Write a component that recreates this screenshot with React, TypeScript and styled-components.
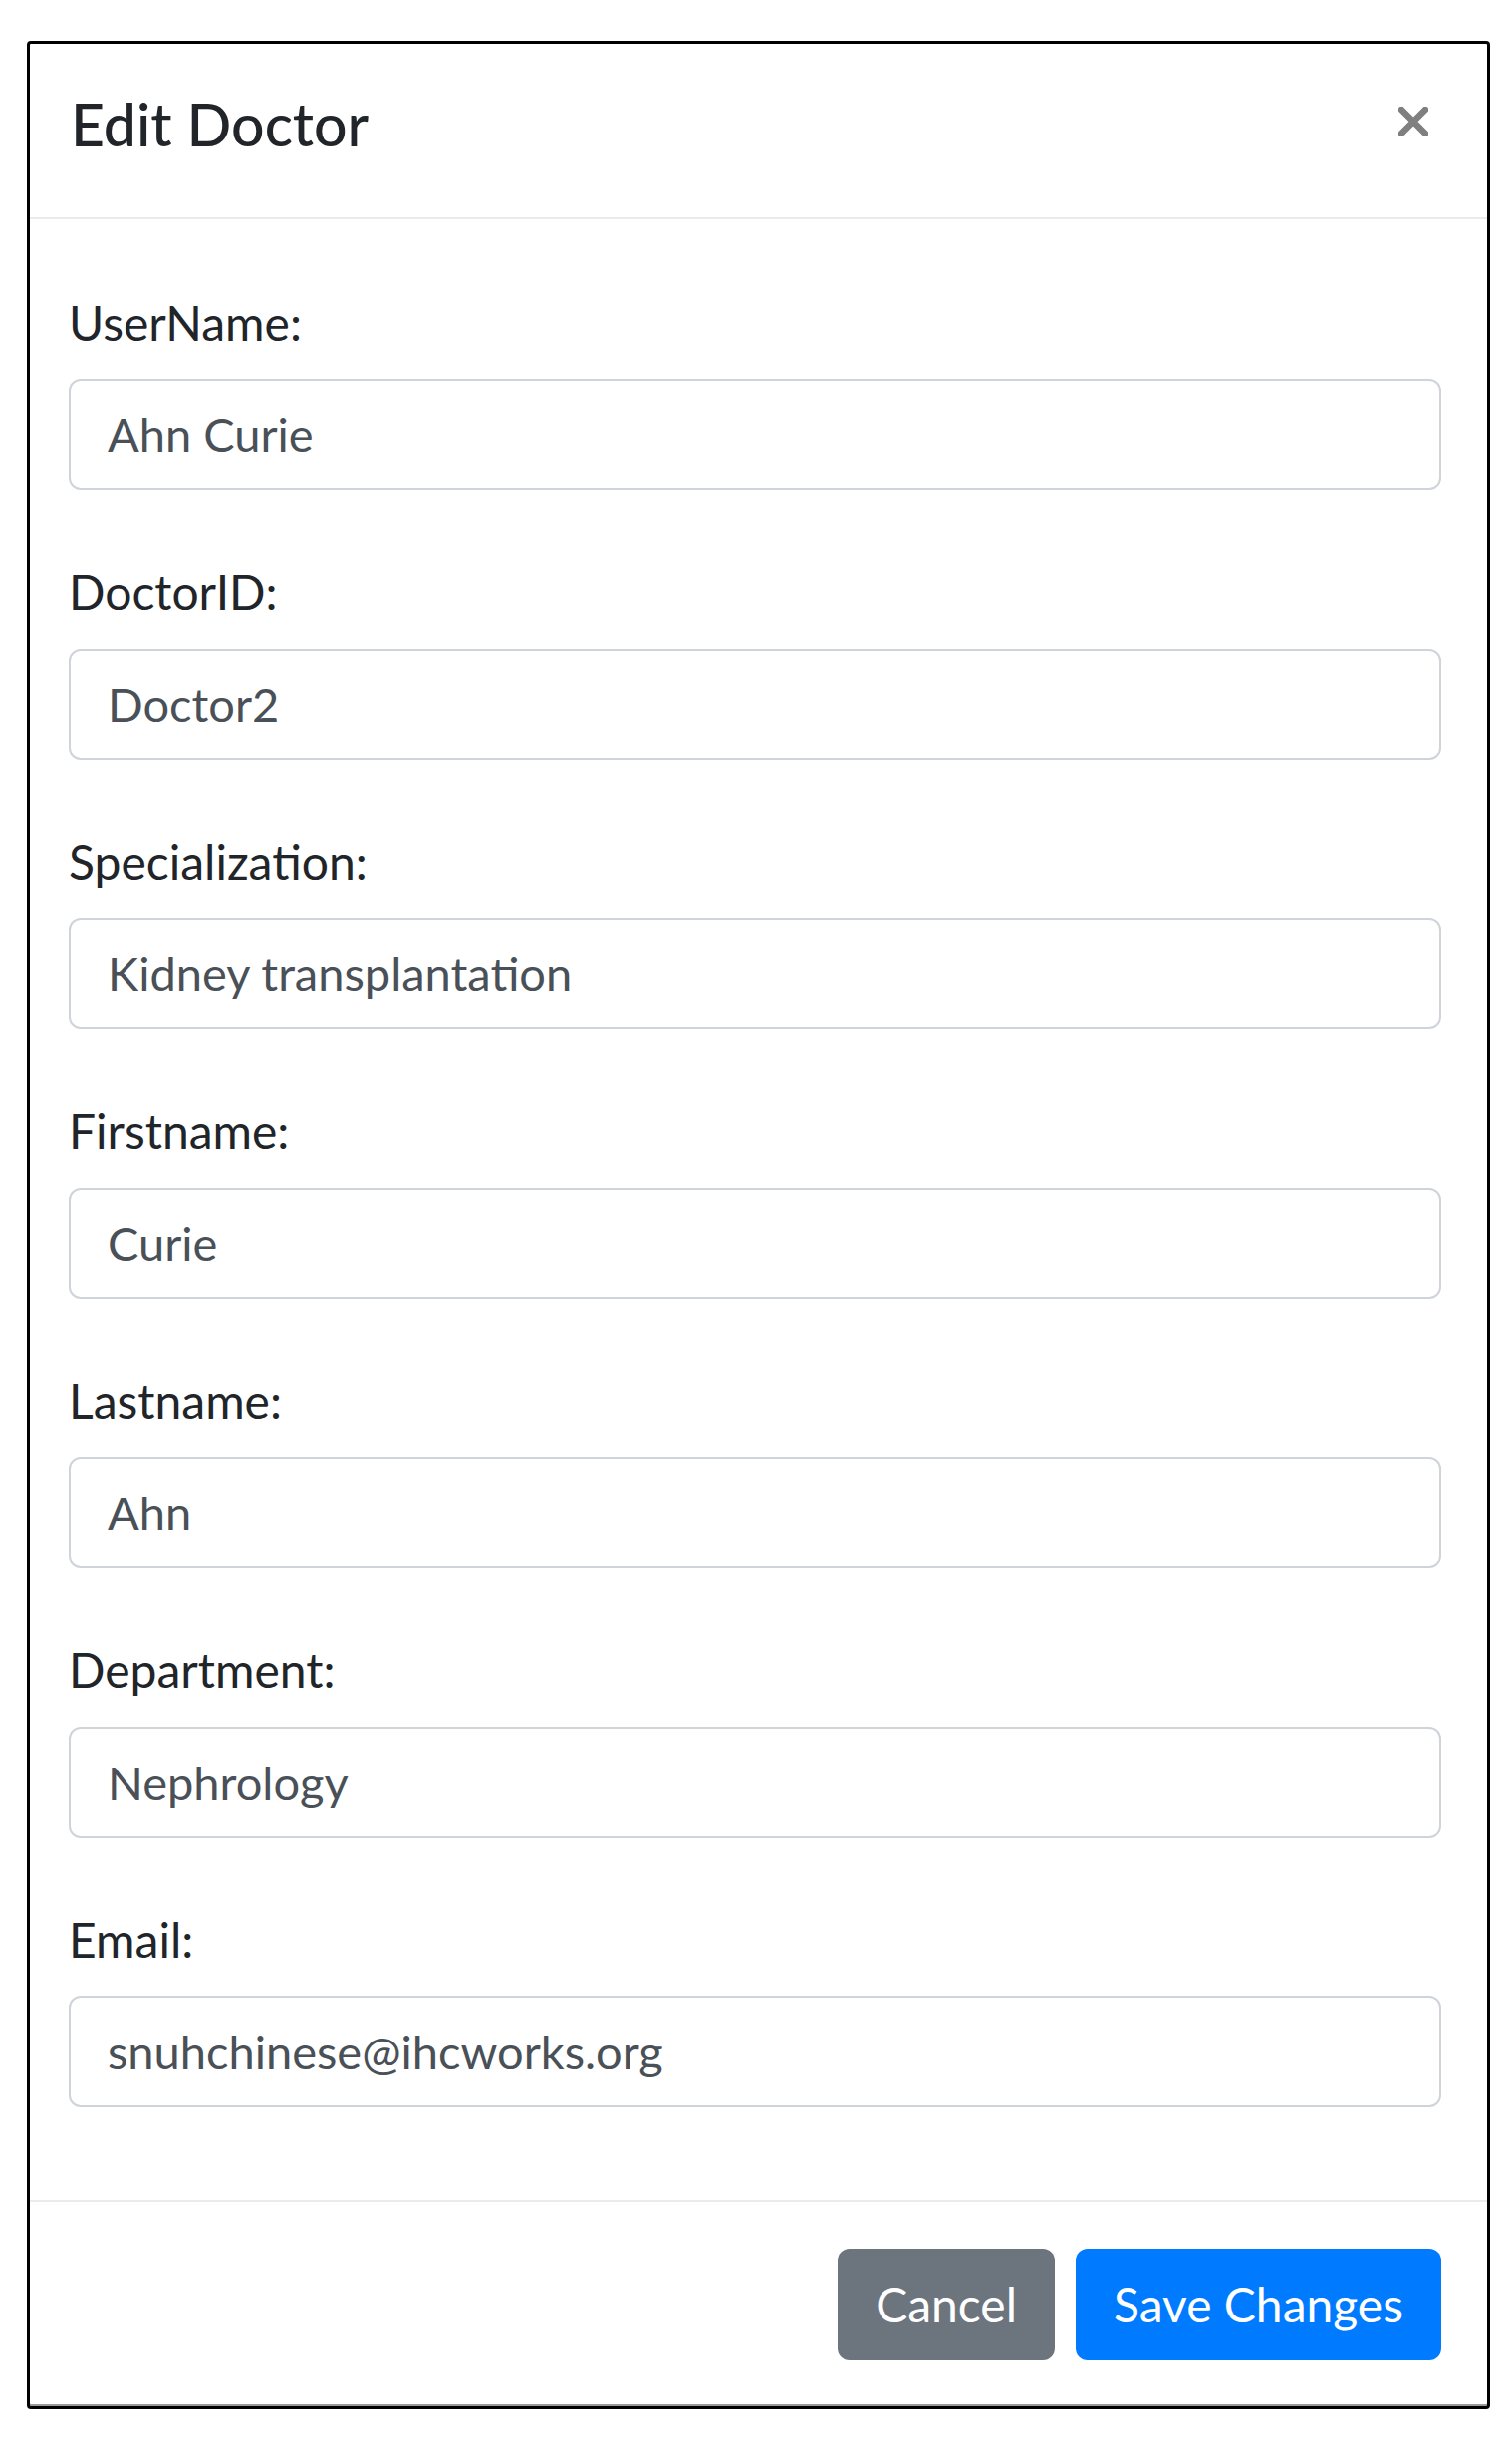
import React from "react";
import styled, { createGlobalStyle } from "styled-components";

const GlobalStyle = createGlobalStyle`
  html, body {
    margin: 0;
    padding: 0;
    background: #ffffff;
  }
  body {
    font-family: "Segoe UI", Lato, "Open Sans", sans-serif;
    color: #212529;
  }
  * {
    box-sizing: border-box;
  }
`;

const Page = styled.div`
  padding: 41px 0 0 27px;
  width: 1518px;
  min-height: 2460px;
`;

const Modal = styled.div`
  width: 1469px;
  height: 2377px;
  border: 3px solid #000000;
  border-radius: 4px;
  background: #ffffff;
  display: flex;
  flex-direction: column;
  box-shadow: inset 0 -2px 0 #9a9a9a;
`;

const Header = styled.div`
  height: 176px;
  flex-shrink: 0;
  display: flex;
  justify-content: space-between;
  align-items: flex-start;
  padding: 46px 59px 0 41px;
  border-bottom: 2px solid #e9ecef;
`;

const Title = styled.h5`
  margin: 0;
  font-size: 59px;
  font-weight: 500;
  line-height: 1.2;
  color: #212529;
`;

const CloseButton = styled.button`
  margin-top: 17px;
  padding: 0;
  border: 0;
  background: transparent;
  width: 30px;
  height: 30px;
  cursor: pointer;
  display: flex;
`;

const Body = styled.div`
  flex: 1;
  display: flex;
  flex-direction: column;
  gap: 72px;
  padding: 73.5px 46px 0 39px;
`;

const Group = styled.div`
  display: flex;
  flex-direction: column;
`;

const Label = styled.label`
  font-size: 48px;
  line-height: 60px;
  margin: 0 0 26.5px;
  color: #212529;
`;

const Input = styled.input`
  width: 100%;
  height: 112px;
  padding: 0 37px;
  border: 2px solid #ced4da;
  border-radius: 12px;
  font-family: "Segoe UI", Lato, "Open Sans", sans-serif;
  font-size: 47px;
  color: #495057;
  background: #ffffff;
  outline: none;
`;

const Footer = styled.div`
  height: 207px;
  flex-shrink: 0;
  display: flex;
  justify-content: flex-end;
  align-items: center;
  gap: 21px;
  padding: 0 46px 0 0;
  border-top: 2px solid #e9ecef;
`;

const Button = styled.button<{ $variant: "secondary" | "primary" }>`
  height: 112px;
  padding: 0 38px;
  border: 0;
  border-radius: 12px;
  font-family: "Segoe UI", Lato, "Open Sans", sans-serif;
  font-size: 48px;
  color: #ffffff;
  background: ${(p) => (p.$variant === "primary" ? "#007bff" : "#6c757d")};
  cursor: pointer;
`;

const fields = [
  { label: "UserName:", value: "Ahn Curie" },
  { label: "DoctorID:", value: "Doctor2" },
  { label: "Specialization:", value: "Kidney transplantation" },
  { label: "Firstname:", value: "Curie" },
  { label: "Lastname:", value: "Ahn" },
  { label: "Department:", value: "Nephrology" },
  { label: "Email:", value: "snuhchinese@ihcworks.org" },
];

const CloseIcon = () => (
  <svg width="30" height="30" viewBox="0 0 30 30">
    <path
      d="M3 3 L27 27 M27 3 L3 27"
      stroke="#7f7f7f"
      strokeWidth="6.5"
      strokeLinecap="round"
      fill="none"
    />
  </svg>
);

export default function App() {
  return (
    <>
      <GlobalStyle />
      <Page>
        <Modal>
          <Header>
            <Title>Edit Doctor</Title>
            <CloseButton aria-label="Close">
              <CloseIcon />
            </CloseButton>
          </Header>
          <Body>
            {fields.map((f) => (
              <Group key={f.label}>
                <Label>{f.label}</Label>
                <Input defaultValue={f.value} />
              </Group>
            ))}
          </Body>
          <Footer>
            <Button $variant="secondary">Cancel</Button>
            <Button $variant="primary">Save Changes</Button>
          </Footer>
        </Modal>
      </Page>
    </>
  );
}
